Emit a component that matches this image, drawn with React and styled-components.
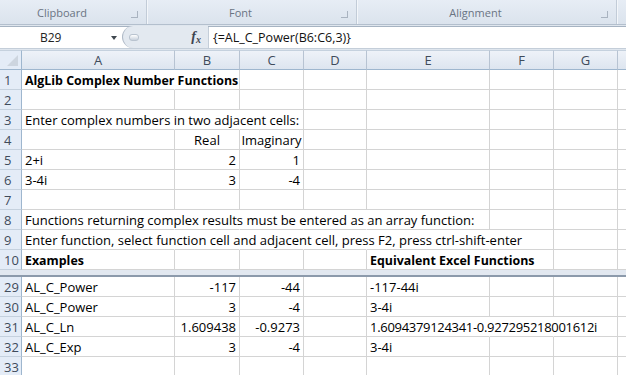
import React from 'react';
import styled, { createGlobalStyle } from 'styled-components';

const GlobalStyle = createGlobalStyle`
  html, body {
    margin: 0;
    padding: 0;
    background: #ffffff;
    overflow: hidden;
  }
  body {
    font-family: "Open Sans", sans-serif;
  }
`;

// H only peeks in at the right edge, so its letter is off screen
const COLS = [
  { key: 'A', width: 153 },
  { key: 'B', width: 65 },
  { key: 'C', width: 64 },
  { key: 'D', width: 63 },
  { key: 'E', width: 123 },
  { key: 'F', width: 64 },
  { key: 'G', width: 64 },
  { key: 'H', width: 40, label: '' },
];

const template = `22px ${COLS.map((c) => c.width + 'px').join(' ')}`;

const Window = styled.div`
  width: 626px;
  height: 375px;
  overflow: hidden;
  display: flex;
  flex-direction: column;
`;

const Ribbon = styled.div`
  height: 24px;
  flex: none;
  display: flex;
  background: linear-gradient(#e7edf5, #dbe3ed);
  border-bottom: 1px solid #b3bfcd;
`;

const Group = styled.div`
  width: ${({ w }) => w}px;
  flex: none;
  position: relative;
  display: flex;
  align-items: flex-end;
  justify-content: center;
  padding: 0 22px 4px 0;
  box-sizing: border-box;
  font-size: 11px;
  color: #6a7483;
  border-right: 1px solid #c2ccd8;
  box-shadow: 1px 0 0 #f3f6fa;
`;

const Launcher = styled.span`
  position: absolute;
  right: 8px;
  top: 11px;
  width: 6px;
  height: 6px;
  border: 1px solid #a9b3c0;
  border-top: none;
  border-left: none;
`;

const FormulaArea = styled.div`
  height: 25px;
  flex: none;
  padding-top: 1px;
  box-sizing: border-box;
  background: #dfe6ee;
  display: flex;
  align-items: flex-start;
`;

const FormulaBox = styled.div`
  flex: 1;
  height: 21px;
  display: flex;
  align-items: center;
  background: #ffffff;
  border-top: 1px solid #a6b3c2;
  border-bottom: 1px solid #c4ced9;
`;

const NameBox = styled.div`
  width: 122px;
  flex: none;
  display: flex;
  align-items: center;
  justify-content: space-between;
  padding: 0 5px 0 40px;
  box-sizing: border-box;
  font-size: 12px;
  color: #222;
`;

const Arrow = styled.span`
  width: 0;
  height: 0;
  border-left: 3px solid transparent;
  border-right: 3px solid transparent;
  border-top: 4px solid #404850;
`;

const Splitter = styled.div`
  width: 85px;
  height: 22px;
  flex: none;
  display: flex;
  align-items: center;
  background: #e3e9f0;
  margin-top: -1px;
  border-radius: 11px 0 0 11px;
  border-left: 1px solid #aeb9c6;
`;

const Knob = styled.span`
  margin-left: 6px;
  width: 8px;
  height: 5px;
  border-radius: 3px;
  background: linear-gradient(#ffffff, #c8d1dc);
  border: 1px solid #b9c3cf;
`;

const Fx = styled.span`
  margin-left: auto;
  margin-right: 7px;
  font-family: "Liberation Serif", serif;
  font-style: italic;
  font-weight: bold;
  font-size: 14px;
  color: #3c4450;
`;

const FxSub = styled.span`
  font-size: 10px;
  position: relative;
  top: 2px;
`;

const FormulaText = styled.div`
  padding-left: 4px;
  border-left: 1px solid #c4ced9;
  height: 100%;
  display: flex;
  align-items: center;
  font-size: 12.5px;
  color: #111;
`;

const Pane = styled.div`
  flex: none;
  display: grid;
  grid-template-columns: ${template};
  grid-auto-rows: 20px;
`;

const Corner = styled.div`
  background: #e4ecf7;
  border-right: 1px solid #9eb6ce;
  border-bottom: 1px solid #9eb6ce;
  border-top: 1px solid #c5d1de;
  position: relative;
  &::after {
    content: '';
    position: absolute;
    right: 3px;
    bottom: 3px;
    border-left: 11px solid transparent;
    border-bottom: 11px solid #cdd5df;
  }
`;

const ColHead = styled.div`
  background: linear-gradient(#eef2f8, #dde5ef);
  border-top: 1px solid #c5d1de;
  border-right: 1px solid #b7c3d2;
  border-bottom: 1px solid #9eb6ce;
  display: flex;
  align-items: center;
  justify-content: center;
  font-size: 13px;
  color: #3f4b5b;
`;

const RowHead = styled.div`
  background: #e4ecf7;
  border-right: 1px solid #9eb6ce;
  border-bottom: 1px solid #c5d1de;
  display: flex;
  align-items: center;
  padding-left: 4px;
  font-size: 13px;
  color: #3f4b5b;
`;

const Cell = styled.div`
  position: relative;
  border-right: 1px solid ${({ hideRight }) => (hideRight ? '#ffffff' : '#d4d4d4')};
  border-bottom: 1px solid #d4d4d4;
  font-size: ${({ bold }) => (bold ? '12.4px' : '13px')};
  font-weight: ${({ bold }) => (bold ? 700 : 400)};
  letter-spacing: ${({ tight }) => (tight ? '-0.3px' : 'normal')};
  color: #000;
  white-space: nowrap;
  display: flex;
  align-items: center;
  justify-content: ${({ align }) => align || 'flex-start'};
  padding: 1px 3px 0;
  z-index: ${({ spill }) => (spill ? 1 : 0)};
`;

const Divider = styled.div`
  flex: none;
  height: 7px;
  background: #e2e8f0;
  border-bottom: 2px solid #8c9aab;
  box-sizing: border-box;
`;

const R = 'flex-end';
const C = 'center';

const top = [
  { n: 1, cells: { A: { t: 'AlgLib Complex Number Functions', bold: true, span: 1 } } },
  { n: 2, cells: {} },
  { n: 3, cells: { A: { t: 'Enter complex numbers in two adjacent cells:', span: 2 } } },
  { n: 4, cells: { B: { t: 'Real', align: C }, C: { t: 'Imaginary', align: C } } },
  { n: 5, cells: { A: { t: '2+i' }, B: { t: '2', align: R }, C: { t: '1', align: R } } },
  { n: 6, cells: { A: { t: '3-4i' }, B: { t: '3', align: R }, C: { t: '-4', align: R } } },
  { n: 7, cells: {} },
  { n: 8, cells: { A: { t: 'Functions returning complex results must be entered as an array function:', span: 4 } } },
  { n: 9, cells: { A: { t: 'Enter function, select function cell and adjacent cell, press F2, press ctrl-shift-enter', span: 5 } } },
  { n: 10, cells: { A: { t: 'Examples', bold: true }, E: { t: 'Equivalent Excel Functions', bold: true, span: 1 } } },
];

const bottom = [
  { n: 29, cells: { A: { t: 'AL_C_Power' }, B: { t: '-117', align: R }, C: { t: '-44', align: R }, E: { t: '-117-44i' } } },
  { n: 30, cells: { A: { t: 'AL_C_Power' }, B: { t: '3', align: R }, C: { t: '-4', align: R }, E: { t: '3-4i' } } },
  { n: 31, cells: { A: { t: 'AL_C_Ln' }, B: { t: '1.609438', align: R }, C: { t: '-0.9273', align: R }, E: { t: '1.6094379124341-0.927295218001612i', span: 2, tight: true } } },
  { n: 32, cells: { A: { t: 'AL_C_Exp' }, B: { t: '3', align: R }, C: { t: '-4', align: R }, E: { t: '3-4i' } } },
  { n: 33, cells: {} },
];

const renderRow = (row) => {
  const out = [<RowHead key={`h${row.n}`}>{row.n}</RowHead>];
  let remaining = 0;
  COLS.forEach((col) => {
    const c = row.cells[col.key];
    if (c && c.span) remaining = c.span + 1;
    const hideRight = remaining > 1;
    if (remaining > 0) remaining -= 1;
    out.push(
      <Cell
        key={`${row.n}${col.key}`}
        bold={c && c.bold}
        align={c && c.align}
        spill={c && c.span}
        tight={c && c.tight}
        hideRight={hideRight}
      >
        {c ? c.t : ''}
      </Cell>
    );
  });
  return out;
};

const App = () => (
  <Window>
    <GlobalStyle />
    <Ribbon>
      <Group w={147}>
        Clipboard
        <Launcher />
      </Group>
      <Group w={210}>
        Font
        <Launcher />
      </Group>
      <Group w={260}>
        Alignment
        <Launcher />
      </Group>
    </Ribbon>
    <FormulaArea>
      <FormulaBox>
        <NameBox>
          <span>B29</span>
          <Arrow />
        </NameBox>
        <Splitter>
          <Knob />
          <Fx>
            f<FxSub>x</FxSub>
          </Fx>
        </Splitter>
        <FormulaText>{'{=AL_C_Power(B6:C6,3)}'}</FormulaText>
      </FormulaBox>
    </FormulaArea>
    <Pane>
      <Corner />
      {COLS.map((c) => (
        <ColHead key={c.key}>{c.label ?? c.key}</ColHead>
      ))}
      {top.map(renderRow)}
    </Pane>
    <Divider />
    <Pane>{bottom.map(renderRow)}</Pane>
  </Window>
);

export default App;
